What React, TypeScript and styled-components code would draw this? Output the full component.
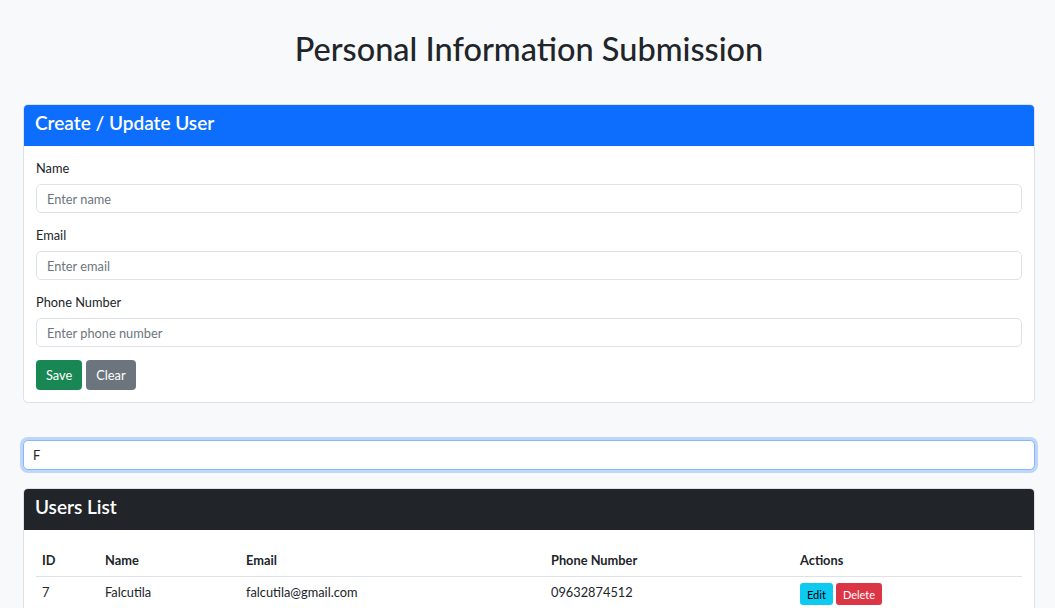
import React, {useState} from "react";
import styled, {createGlobalStyle} from "styled-components";

const GlobalStyle = createGlobalStyle`
  * { box-sizing: border-box; }
  body {
    margin: 0;
    background: #f8f9fa;
    font-family: Lato, "Noto Sans", sans-serif;
    font-size: 12.8px;
    color: #212529;
  }
`;

const Container = styled.main`
  padding: 30px 20px 0 23px;
`;

const Title = styled.h1`
  margin: 0 0 36px;
  text-align: center;
  font-size: 32.5px;
  font-weight: 500;
  line-height: 38px;
  color: #212529;
`;

const Card = styled.section`
  background: #fff;
  border: 1px solid #dee2e6;
  border-radius: 5px;
  overflow: hidden;
`;

const CardHeader = styled.div<{ $bg: string }>`
  background: ${p => p.$bg};
  color: #fff;
  height: 42px;
  padding: 0 12px 5px;
  display: flex;
  align-items: center;
  margin: -1px -1px 0;
`;

const CardTitle = styled.h4`
  margin: 0;
  font-size: 19px;
  font-weight: 600;
`;

const CardBody = styled.div`
  padding: 12px;
`;

const Field = styled.div`
  margin-bottom: 13px;
`;

const Label = styled.label`
  display: block;
  line-height: 19px;
  margin: 1px 0 6px;
`;

const Input = styled.input<{ $focus?: boolean }>`
  display: block;
  width: 100%;
  height: ${p => (p.$focus ? "30px" : "29px")};
  padding: 0 ${p => (p.$focus ? "9px" : "10px")};
  font: inherit;
  font-size: 12.8px;
  color: #212529;
  background: #fff;
  border: 1px solid ${p => (p.$focus ? "#86b7fe" : "#dee2e6")};
  border-radius: 5px;
  outline: none;
  box-shadow: ${p => (p.$focus ? "0 0 0 3px rgba(13,110,253,.25)" : "none")};

  &::placeholder {
    color: #6c757d;
  }
`;

const Buttons = styled.div`
  display: flex;
  gap: 4px;
`;

const Button = styled.button<{ $bg: string; $fg?: string; $sm?: boolean }>`
  font: inherit;
  font-size: ${p => (p.$sm ? "11px" : "12.8px")};
  height: ${p => (p.$sm ? "22px" : "30px")};
  padding: ${p => (p.$sm ? "0 7px" : "0 10px")};
  background: ${p => p.$bg};
  color: ${p => p.$fg ?? "#fff"};
  border: none;
  border-radius: ${p => (p.$sm ? "3px" : "4px")};
  cursor: pointer;
`;

const Search = styled.div`
  margin: 37px 0 18px;
`;

const Table = styled.table`
  width: 100%;
  margin-top: 2px;
  border-collapse: collapse;
  table-layout: fixed;
`;

const Th = styled.th<{ $w?: number }>`
  text-align: left;
  font-weight: 700;
  padding: 0 6px;
  height: 32px;
  width: ${p => (p.$w ? `${p.$w}px` : "auto")};
  border-bottom: 1px solid #dee2e6;
`;

const Td = styled.td`
  padding: 0 6px;
  height: 32px;
  border-bottom: 1px solid #dee2e6;
`;

const ActionCell = styled.div`
  display: flex;
  gap: 3px;
  padding-top: 4px;
`;

type User = { id: number; name: string; email: string; phone: string };

const users: User[] = [
    {id: 7, name: "Falcutila", email: "falcutila@gmail.com", phone: "09632874512"},
];

export default function App() {
    const [search, setSearch] = useState("F");

    return (
        <>
            <GlobalStyle/>
            <Container>
                <Title>Personal Information Submission</Title>

                <Card>
                    <CardHeader $bg="#0d6efd">
                        <CardTitle>Create / Update User</CardTitle>
                    </CardHeader>
                    <CardBody>
                        <Field>
                            <Label>Name</Label>
                            <Input placeholder="Enter name"/>
                        </Field>
                        <Field>
                            <Label>Email</Label>
                            <Input placeholder="Enter email"/>
                        </Field>
                        <Field>
                            <Label>Phone Number</Label>
                            <Input placeholder="Enter phone number"/>
                        </Field>
                        <Buttons>
                            <Button $bg="#198754">Save</Button>
                            <Button $bg="#6c757d">Clear</Button>
                        </Buttons>
                    </CardBody>
                </Card>

                <Search>
                    <Input $focus value={search} onChange={e => setSearch(e.target.value)}/>
                </Search>

                <Card>
                    <CardHeader $bg="#212529">
                        <CardTitle>Users List</CardTitle>
                    </CardHeader>
                    <CardBody>
                        <Table>
                            <thead>
                            <tr>
                                <Th $w={63}>ID</Th>
                                <Th $w={141}>Name</Th>
                                <Th $w={305}>Email</Th>
                                <Th $w={249}>Phone Number</Th>
                                <Th>Actions</Th>
                            </tr>
                            </thead>
                            <tbody>
                            {users.map(u => (
                                <tr key={u.id}>
                                    <Td>{u.id}</Td>
                                    <Td>{u.name}</Td>
                                    <Td>{u.email}</Td>
                                    <Td>{u.phone}</Td>
                                    <Td>
                                        <ActionCell>
                                            <Button $sm $bg="#0dcaf0" $fg="#000">Edit</Button>
                                            <Button $sm $bg="#dc3545">Delete</Button>
                                        </ActionCell>
                                    </Td>
                                </tr>
                            ))}
                            </tbody>
                        </Table>
                    </CardBody>
                </Card>
            </Container>
        </>
    );
}
